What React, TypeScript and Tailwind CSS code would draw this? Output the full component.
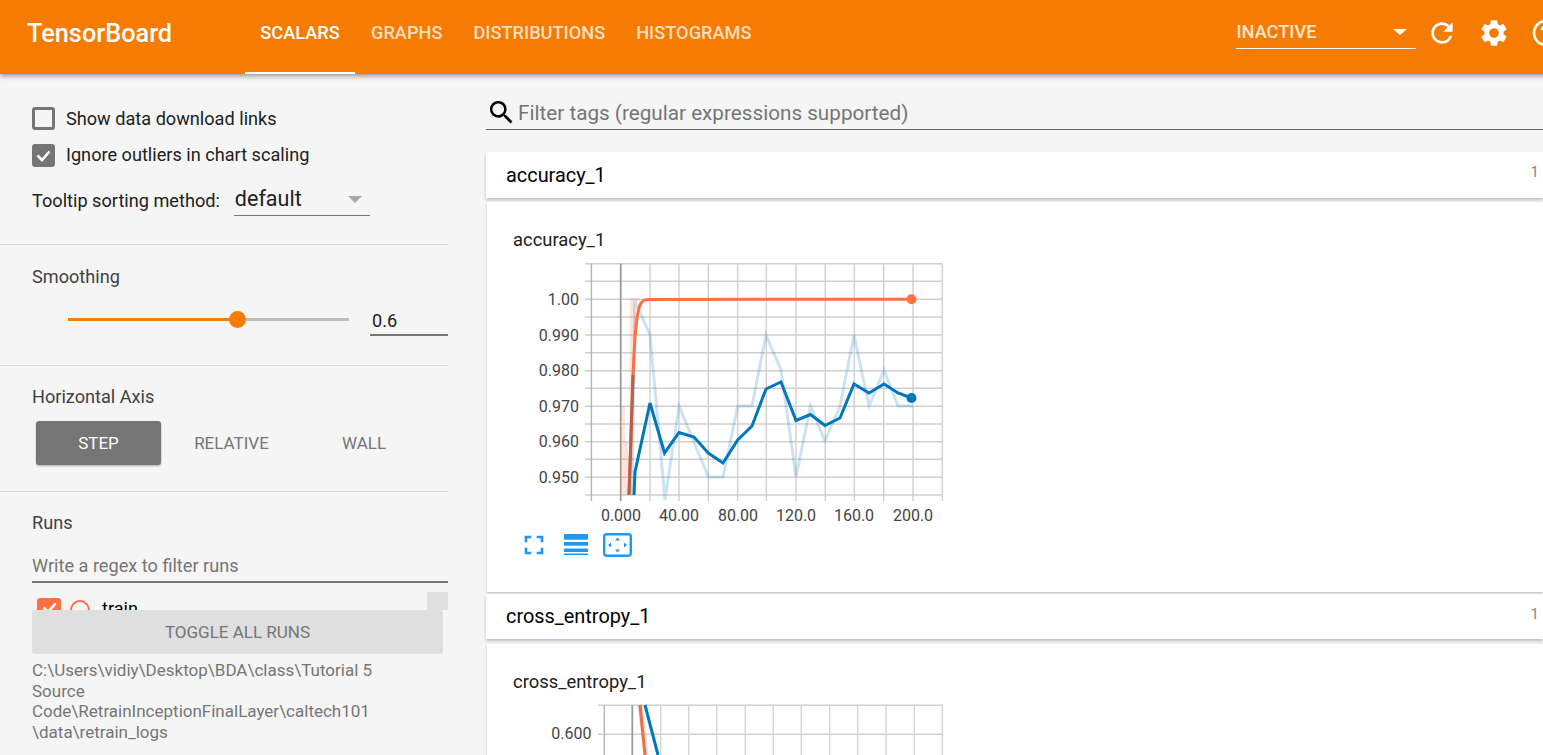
import React from "react";
import { MdRefresh, MdSettings, MdHelpOutline, MdSearch, MdFullscreen } from "react-icons/md";

const hLines = [281.3, 299.3, 317, 335, 352.7, 370.7, 388.3, 406.3, 424, 441.7, 459.3, 477.3, 495];
const vLines = [591.4, 650, 679, 708.3, 737.7, 766.3, 796, 825.3, 854.3, 883.7, 913, 942.3];
const yLabels: [string, number][] = [["1.00", 299], ["0.990", 335], ["0.980", 370], ["0.970", 406], ["0.960", 441], ["0.950", 477]];
const xLabels: [string, number][] = [["0.000", 621], ["40.00", 679], ["80.00", 738], ["120.0", 796], ["160.0", 854], ["200.0", 913]];
const v2Lines = [604.3, 660.7, 688.7, 716.7, 745.3, 773.3, 801.3, 829.7, 857.7, 886, 914.3, 942.3];

const rawBlue = "632,495 635,300.7 650,335 665,500 679,406 694,442 708.3,477 723,477 737.7,406 752,406 766,335 781,370 796,477 810.5,406 825,441 840,406 854,335 869,406 884,370 898,406 913,406";
const blue = "634,495 635,472 650,403 664.5,453 679,432.5 694,437 708.3,453 723,463 737.7,440 752,426 766,389 781,382 796,420.5 810.5,414.5 825,425.5 840,418 854,384 869,393 884,384 898,393 911.5,398";
const orange = "629,495 631,435 633,375 635,337 637,318 639,308 641,303 644,300.3 648,299.4 911.5,299.3";

function Chart() {
  return (
    <svg width="440" height="270" viewBox="520 258 440 270" className="block">
      <g stroke="#cfcfcf" strokeWidth="1.4" fill="none">
        <line x1="585" x2="942.8" y1="263.7" y2="263.7" />
        {hLines.map((y) => (
          <line key={y} x1="585" x2="942.8" y1={y} y2={y} />
        ))}
        {vLines.map((x) => (
          <line key={x} x1={x} x2={x} y1="263.7" y2="501" stroke={x === 591.4 ? "#b4b4b4" : "#d0d0d0"} />
        ))}
        <line x1="620.7" x2="620.7" y1="263.7" y2="501" stroke="#9a9a9a" strokeWidth="1.8" />
      </g>
      <path d="M622 495 V406 H625 V442 H628 V495 Z M629 495 L630 298 H640 V300.5 H635 V340 L632 495 Z" fill="#ff7043" fillOpacity="0.2" />
      <polyline points={rawBlue} fill="none" stroke="#0077bb" strokeOpacity="0.2" strokeWidth="3" />
      <polyline points={blue} fill="none" stroke="#0077bb" strokeWidth="3" />
      <polyline points={orange} fill="none" stroke="#ff7043" strokeWidth="3" />
      <polyline points="629,495 631,435 633,375" fill="none" stroke="#b4634a" strokeWidth="3" />
      <circle cx="911.5" cy="299.3" r="5" fill="#ff7043" />
      <circle cx="911.5" cy="398" r="5" fill="#0077bb" />
      <g fontFamily="Roboto, sans-serif" fontSize="16" fill="#444">
        {yLabels.map(([t, y]) => (
          <text key={t} x="579" y={y + 5.5} textAnchor="end">{t}</text>
        ))}
        {xLabels.map(([t, x]) => (
          <text key={t} x={x} y="520.5" textAnchor="middle">{t}</text>
        ))}
      </g>
    </svg>
  );
}

function Chart2() {
  return (
    <svg width="440" height="60" viewBox="520 700 440 60" className="block">
      <g stroke="#cfcfcf" strokeWidth="1.4" fill="none">
        <line x1="598" x2="942.8" y1="705.3" y2="705.3" />
        <line x1="598" x2="942.8" y1="734.3" y2="734.3" />
        {v2Lines.map((x) => (
          <line key={x} x1={x} x2={x} y1="705.3" y2="760" stroke={x === 604.3 ? "#b4b4b4" : "#d4d4d4"} />
        ))}
        <line x1="632.3" x2="632.3" y1="705.3" y2="760" stroke="#9a9a9a" strokeWidth="1.8" />
      </g>
      <line x1="640" y1="705" x2="646" y2="755" stroke="#ff7043" strokeOpacity="0.25" strokeWidth="5" />
      <line x1="640" y1="705" x2="645" y2="755" stroke="#e8704c" strokeWidth="3" />
      <line x1="645" y1="705" x2="658" y2="755" stroke="#0077bb" strokeWidth="3" />
      <text x="591.5" y="739" textAnchor="end" fontFamily="Roboto, sans-serif" fontSize="16" fill="#444">0.600</text>
    </svg>
  );
}

function Divider() {
  return <div className="h-px bg-[#dcdcdc]" />;
}

function Header() {
  return (
    <header className="relative z-10 flex h-[74px] w-[1600px] shrink-0 items-stretch bg-[#f57c00] text-white shadow-[0_2px_5px_rgba(0,0,0,0.4)]">
      <div className="ml-[27px] w-[218px] self-center pb-[7px] text-[25.3px] font-medium">TensorBoard</div>
      <nav className="flex text-[18.2px] font-medium">
        <div className="flex w-[110px] items-center justify-center border-b-2 border-white pb-[7px]">SCALARS</div>
        <div className="ml-[16px] flex items-center pb-[9px] text-white/75">GRAPHS</div>
        <div className="ml-[31px] flex items-center pb-[9px] text-white/75">DISTRIBUTIONS</div>
        <div className="ml-[31px] flex items-center pb-[9px] text-white/75">HISTOGRAMS</div>
      </nav>
      <div className="ml-[485px] flex items-center pb-[9px]">
        <div className="flex h-[32px] w-[180px] items-center justify-between border-b border-white pr-[9px] text-[18.2px] font-medium text-white/80">
          <span>INACTIVE</span>
          <span className="h-0 w-0 border-x-[7px] border-t-[6px] border-x-transparent border-t-white" />
        </div>
        <MdRefresh className="ml-[10px] text-white" size={32} />
        <MdSettings className="ml-[20px] text-white" size={32} />
        <MdHelpOutline className="ml-[20px] text-white" size={32} />
      </div>
    </header>
  );
}

function Check() {
  return (
    <svg width="17" height="17" viewBox="0 0 17 17" fill="none" stroke="#fff" strokeWidth="2.6">
      <path d="M2.5 8.5 L7 13 L14.5 4.5" />
    </svg>
  );
}

function Sidebar() {
  return (
    <aside className="w-[448px] shrink-0 text-[18.15px] text-[#212121]">
      <div className="h-[170px] pl-[32px] pt-[33px]">
        <label className="flex h-[23px] items-center">
          <span className="h-[23px] w-[23px] rounded-[3px] border-[3px] border-[#757575]" />
          <span className="ml-[11px]">Show data download links</span>
        </label>
        <label className="mt-[13px] flex h-[24px] items-center">
          <span className="flex h-[23px] w-[23px] items-center justify-center rounded-[3px] bg-[#757575]">
            <Check />
          </span>
          <span className="ml-[11px]">Ignore outliers in chart scaling</span>
        </label>
        <div className="mt-[16px] flex items-start">
          <span className="pt-[4px]">Tooltip sorting method:</span>
          <div className="ml-[14px] flex h-[33px] w-[136px] items-center justify-between border-b border-[#757575] pl-px pr-[8px] text-[21.5px]">
            <span>default</span>
            <span className="h-0 w-0 border-x-[7px] border-t-[7px] border-x-transparent border-t-[#a8a8a8]" />
          </div>
        </div>
      </div>
      <Divider />
      <div className="h-[120px] pl-[32px] pt-[18px]">
        <div className="text-[#424242]">Smoothing</div>
        <div className="mt-[13px] flex items-center">
          <div className="ml-[36px] flex h-[3px] w-[281px] items-center bg-[#bdbdbd]">
            <div className="h-[3px] w-[161px] bg-[#f57c00]" />
            <div className="h-[17px] w-[17px] rounded-full bg-[#f57c00]" />
          </div>
          <div className="ml-[21px] flex h-[33px] w-[78px] items-center border-b-2 border-[#757575] pl-[2px] pt-[3px] text-[#212121]">0.6</div>
        </div>
      </div>
      <Divider />
      <div className="h-[125px] pl-[32px] pt-[17px]">
        <div className="text-[#424242]">Horizontal Axis</div>
        <div className="ml-[4px] mt-[11px] flex text-[17px]">
          <div className="flex h-[44px] w-[125px] items-center justify-center rounded-[3px] bg-[#757575] pt-[1px] text-white shadow-[0_1px_2px_rgba(0,0,0,0.3)]">STEP</div>
          <div className="flex h-[44px] w-[141px] items-center justify-center pt-[1px] text-[#757575]">RELATIVE</div>
          <div className="flex h-[44px] w-[124px] items-center justify-center pt-[1px] text-[#757575]">WALL</div>
        </div>
      </div>
      <Divider />
      <div className="pt-[17px]">
        <div className="pl-[32px] text-[#424242]">Runs</div>
        <div className="ml-[32px] mt-[16px] h-[31px] border-b-2 border-[#757575] text-[#757575]">Write a regex to filter runs</div>
        <div className="flex h-[27px] overflow-hidden pt-[9px]">
          <div className="flex flex-1 items-start pl-[37px] pt-[6px]">
            <span className="flex h-[24px] w-[24px] shrink-0 items-start justify-center rounded-[3px] bg-[#ff7043] pt-[1px]">
              <Check />
            </span>
            <span className="ml-[9px] mt-[2px] h-[20px] w-[20px] shrink-0 rounded-full border-2 border-[#ff7043]" />
            <span className="ml-[12px] mt-[-3px] text-black">train</span>
          </div>
          <div className="h-[18px] w-[21px] bg-[#e0e0e0]" />
        </div>
        <div className="relative ml-[32px] flex h-[44px] w-[411px] items-center justify-center rounded-[3px] bg-[#dfdfdf] pt-[1px] text-[17px] text-[#757575]">TOGGLE ALL RUNS</div>
        <div className="ml-[32px] mt-[6px] w-[380px] text-[17px] leading-[20.5px] text-[#757575]">
          <div>C:\Users\vidiy\Desktop\BDA\class\Tutorial 5</div>
          <div>Source</div>
          <div>Code\RetrainInceptionFinalLayer\caltech101</div>
          <div>\data\retrain_logs</div>
        </div>
      </div>
    </aside>
  );
}

function Main() {
  return (
    <main className="ml-[38px] min-w-0 flex-1">
      <div className="flex h-[56px] items-center border-b border-[#616161] pt-[24px]">
        <MdSearch className="mb-[2px] text-black" size={31} />
        <span className="ml-px text-[20.7px] text-[#757575]">Filter tags (regular expressions supported)</span>
      </div>
      <section className="mt-[22px] flex h-[46px] items-center justify-between bg-white pl-[20px] shadow-[0_2px_3px_rgba(0,0,0,0.22)]">
        <span className="pt-[2px] text-[19.9px] text-black">accuracy_1</span>
        <span className="mb-[5px] pr-[4px] text-[15px] text-[#888]">1</span>
      </section>
      <div className="ml-px mt-[4px] h-[390px] bg-white shadow-[0_1px_2px_rgba(0,0,0,0.25)]">
        <div className="pl-[26px] pt-[27px] text-[18.4px] leading-[22px] text-[#212121]">accuracy_1</div>
        <div className="ml-[33px] mt-[7px]"><Chart /></div>
        <div className="ml-[31px] mt-[1px] flex items-center">
          <MdFullscreen className="text-[#2196f3]" size={32} />
          <svg className="ml-[14px]" width="24" height="22" viewBox="0 0 24 22" fill="#2196f3">
            <rect x="0" y="0" width="24" height="5.7" />
            <rect x="0" y="8" width="24" height="3.7" />
            <rect x="0" y="14.5" width="24" height="3.5" />
            <rect x="0" y="19.5" width="24" height="1.5" />
          </svg>
          <svg className="ml-[15px]" width="29" height="24" viewBox="0 0 29 24" fill="#2196f3">
            <rect x="1.2" y="1.2" width="26.6" height="21.6" rx="2.5" fill="none" stroke="#2196f3" strokeWidth="2.4" />
            <path d="M14.5 4.5 L17 7.5 H12 Z M14.5 19.5 L12 16.5 H17 Z M5 12 L8 9.5 V14.5 Z M24 12 L21 14.5 V9.5 Z" />
          </svg>
        </div>
      </div>
      <section className="mt-[2px] flex h-[45px] items-center justify-between bg-white pl-[20px] shadow-[0_2px_3px_rgba(0,0,0,0.22)]">
        <span className="text-[19.9px] text-black">cross_entropy_1</span>
        <span className="mb-[5px] pr-[4px] text-[15px] text-[#888]">1</span>
      </section>
      <div className="ml-px mt-[5px] h-[200px] bg-white shadow-[0_1px_2px_rgba(0,0,0,0.25)]">
        <div className="pl-[26px] pt-[27px] text-[18.4px] leading-[22px] text-[#212121]">cross_entropy_1</div>
        <div className="ml-[33px] mt-[7px]"><Chart2 /></div>
      </div>
    </main>
  );
}

export default function App() {
  return (
    <div className="flex h-screen w-full flex-col overflow-hidden bg-[#f5f5f5] font-['Roboto',sans-serif]">
      <Header />
      <div className="flex min-h-0 flex-1">
        <Sidebar />
        <Main />
      </div>
    </div>
  );
}
